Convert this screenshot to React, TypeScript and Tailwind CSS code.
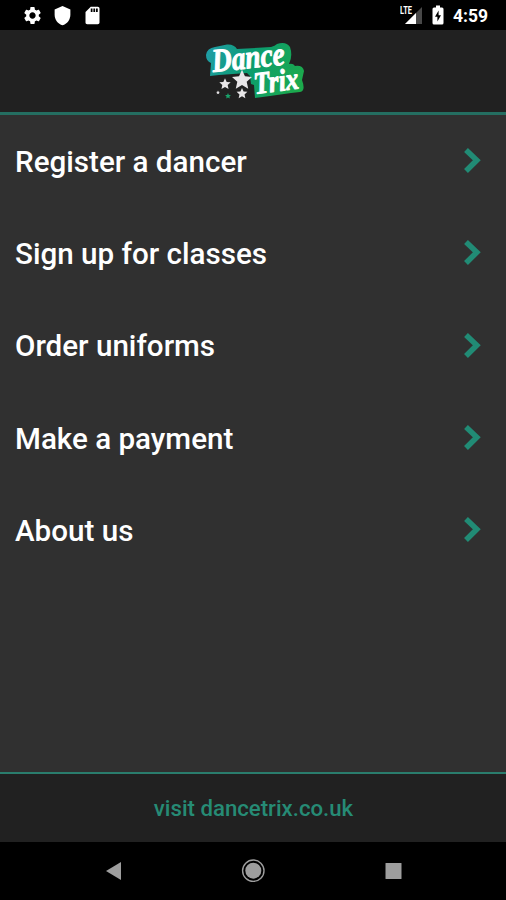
import React from "react";
import { MdSettings, MdShield, MdSdCard } from "react-icons/md";

interface MenuItem {
  id: string;
  label: string;
}

const MENU_ITEMS: MenuItem[] = [
  { id: "register", label: "Register a dancer" },
  { id: "classes", label: "Sign up for classes" },
  { id: "uniforms", label: "Order uniforms" },
  { id: "payment", label: "Make a payment" },
  { id: "about", label: "About us" },
];

const STAR = "M0 -10 L2.9 -3.6 L9.8 -3 L4.6 1.7 L6.1 8.6 L0 5 L-6.1 8.6 L-4.6 1.7 L-9.8 -3 L-2.9 -3.6 Z";

const SignalIcon = () => (
  <svg width="23" height="20" viewBox="0 0 23 20">
    <path d="M5 19 L22 2 V19 Z" fill="#484848" />
    <path d="M5 19 L16 8 V19 Z" fill="#fff" />
    <text x="0" y="9" textLength="12" lengthAdjust="spacingAndGlyphs" fontSize="11" fontWeight="700" fill="#fff" stroke="#000" strokeWidth="2" paintOrder="stroke">
      LTE
    </text>
  </svg>
);

const BatteryIcon = () => (
  <svg width="12" height="20" viewBox="0 0 12 20">
    <path d="M4 0.5 H8 V2.5 H10 Q11.5 2.5 11.5 4 V18 Q11.5 19.5 10 19.5 H2 Q0.5 19.5 0.5 18 V4 Q0.5 2.5 2 2.5 H4 Z" fill="#fff" />
    <path d="M6.6 5.5 L3 11.8 H5.4 V16.5 L9 10.2 H6.6 Z" fill="#000" />
  </svg>
);

const StatusBar = () => (
  <div className="flex h-[30px] shrink-0 items-center bg-black pr-[18px] pl-[22px] text-white">
    <MdSettings className="mr-[9px] size-[21px]" />
    <MdShield className="mr-[9px] size-[21px]" />
    <MdSdCard className="size-[21px]" />
    <div className="ml-auto flex items-center">
      <SignalIcon />
      <span className="ml-[9px]">
        <BatteryIcon />
      </span>
      <span className="ml-[9px] pt-1 text-[17.5px] leading-none font-bold">4:59</span>
    </div>
  </div>
);

// Brand logo: two tilted words on a gradient outline, with a cluster of stars
const Logo = () => (
  <svg width="110" height="66" viewBox="0 0 110 66" className="overflow-visible font-['Liberation_Serif',serif]">
    <defs>
      <linearGradient id="brand" gradientUnits="userSpaceOnUse" x1="6" y1="10" x2="100" y2="50">
        <stop offset="0" stopColor="#209da8" />
        <stop offset="0.45" stopColor="#0b9c70" />
        <stop offset="1" stopColor="#1caa4c" />
      </linearGradient>
    </defs>
    <path
      d="M6 17 Q7 10 15 9 L27 6.5 Q34 6 37 11 L71 9 Q75 8 77 6 Q86 3 90 9 Q93 18 89 26 Q93 25 95 28 Q103 27 104 33 L102 42 Q106 53 100 54 L91 55 L70 58 L55 60 L54 47 L51 46 L50 38 L47 35 L19 37 L10 38 L11 25 Q6 23 6 17 Z"
      fill="url(#brand)"
    />
    <g fill="#fff" stroke="#fff" strokeWidth="0.8" strokeLinejoin="round" fontWeight="700" fontStyle="italic">
      <text fontSize="27" textLength="73" lengthAdjust="spacingAndGlyphs" transform="translate(13 34) rotate(-6) scale(1 1.22)">
        Dance
      </text>
      <text fontSize="25" textLength="45" lengthAdjust="spacingAndGlyphs" transform="translate(55 56) rotate(-7) scale(1 1.24)">
        Trix
      </text>
    </g>
    <g fill="#e8e6e8">
      <path d={STAR} transform="translate(42 42) scale(1.02)" />
      <path d={STAR} transform="translate(25 46) scale(0.58)" />
      <path d={STAR} transform="translate(42 55.5) scale(0.55)" />
      <path d={STAR} transform="translate(18 54.5) scale(0.2)" />
      <path d={STAR} transform="translate(28 58) scale(0.3)" fill="#19a36b" />
    </g>
  </svg>
);

const MenuRow = ({ item }: { item: MenuItem }) => (
  <button className="flex h-[92.3px] w-full items-center justify-between pr-6 pl-[15px] text-left">
    <span className="pt-[3px] text-[29.6px] leading-none font-medium text-white">{item.label}</span>
    <svg width="19" height="28" viewBox="0 0 19 28" fill="none" stroke="#218b75" strokeWidth="5.5">
      <path d="M3 3 L13.8 13.3 L3 24" />
    </svg>
  </button>
);

const NavigationBar = () => (
  <div className="flex h-[58px] shrink-0 justify-center bg-black">
    <svg width="298" height="58" viewBox="0 0 298 58" fill="#9e9e9e">
      <path d="M2 29 L17 20 V38 Z" />
      <circle cx="149.3" cy="28.7" r="8" />
      <circle cx="149.3" cy="28.7" r="10.7" fill="none" stroke="#9e9e9e" strokeWidth="1.4" />
      <rect x="281.5" y="21" width="16" height="16" rx="0.5" />
    </svg>
  </div>
);

export default function App() {
  return (
    <div className="flex h-[900px] w-[506px] flex-col overflow-hidden bg-[#303030] font-['Roboto',sans-serif]">
      <StatusBar />
      <header className="flex h-[85px] shrink-0 justify-center border-b-[3px] border-[#246e61] bg-[#212121] pt-2 pl-1">
        <Logo />
      </header>
      <main className="flex-1">
        {MENU_ITEMS.map((item) => (
          <MenuRow key={item.id} item={item} />
        ))}
      </main>
      <footer className="flex h-[70px] shrink-0 items-center justify-center border-t-2 border-[#2a7d6d] bg-[#212121]">
        <span className="pt-px pl-px text-[22.2px] leading-none font-medium text-[#268b75]">visit dancetrix.co.uk</span>
      </footer>
      <NavigationBar />
    </div>
  );
}
